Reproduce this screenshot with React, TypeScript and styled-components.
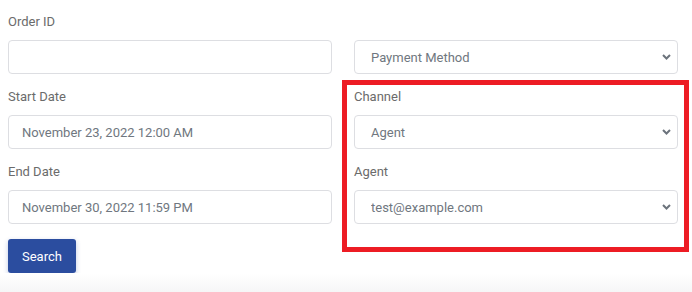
import * as React from "react";
import styled, { createGlobalStyle } from "styled-components";

const GlobalStyle = createGlobalStyle`
  html, body {
    margin: 0;
    padding: 0;
    background: #ffffff;
  }
  body {
    font-family: Roboto, "Liberation Sans", Arial, sans-serif;
  }
`;

const Page = styled.div`
  width: 692px;
  height: 292px;
  display: flex;
  flex-direction: column;
  overflow: hidden;
`;

const Form = styled.form`
  padding: 12px 0 0 8px;
  display: flex;
  flex-direction: column;
  gap: 15px;
`;

const Columns = styled.div`
  display: flex;
  gap: 22px;
`;

const Column = styled.div`
  width: 324px;
  display: flex;
  flex-direction: column;
  gap: 13px;
`;

const Highlight = styled.div`
  position: relative;
  display: flex;
  flex-direction: column;
  gap: 13px;

  &::after {
    content: "";
    position: absolute;
    top: -7px;
    left: -12px;
    right: -11px;
    bottom: -28px;
    border: 5px solid #ed1c24;
    pointer-events: none;
  }
`;

const Field = styled.div`
  display: flex;
  flex-direction: column;
  gap: 8px;
`;

const Label = styled.label`
  font-size: 13px;
  line-height: 20px;
  height: 20px;
  color: #6b6b6b;
`;

const Input = styled.input`
  box-sizing: border-box;
  width: 100%;
  height: 34px;
  padding: 0 13px;
  border: 1px solid #dddee2;
  border-radius: 4px;
  font-family: inherit;
  font-size: 13px;
  color: #707780;
  background: #fff;
  outline: none;
`;

const SelectWrap = styled.div`
  position: relative;
  height: 34px;
`;

const Select = styled.select`
  box-sizing: border-box;
  width: 100%;
  height: 34px;
  padding: 0 30px 0 16px;
  border: 1px solid #dddee2;
  border-radius: 4px;
  font-family: inherit;
  font-size: 13px;
  color: #707780;
  background: #fff;
  appearance: none;
  -webkit-appearance: none;
  outline: none;
`;

const Chevron = styled.svg`
  position: absolute;
  right: 7px;
  top: 14px;
  width: 9px;
  height: 6px;
  pointer-events: none;
`;

const Button = styled.button`
  align-self: flex-start;
  height: 34px;
  padding: 0 14px;
  border: none;
  border-radius: 3px;
  background: #2b4d9f;
  color: #fff;
  font-family: inherit;
  font-size: 13px;
  font-weight: 400;
  box-shadow: 0 2px 5px rgba(43, 77, 159, 0.3);
  cursor: pointer;
`;

const Fade = styled.div`
  margin-top: auto;
  height: 20px;
  background: linear-gradient(#ffffff, #f6f6f7);
`;

const Dropdown: React.FC<{ value: string }> = ({ value }) => (
  <SelectWrap>
    <Select defaultValue={value}>
      <option>{value}</option>
    </Select>
    <Chevron viewBox="0 0 9 6">
      <path d="M1 1l3.5 3.5L8 1" fill="none" stroke="#6c737c" strokeWidth="2" />
    </Chevron>
  </SelectWrap>
);

export default function App() {
  return (
    <Page>
      <GlobalStyle />
      <Form onSubmit={(e) => e.preventDefault()}>
        <Columns>
          <Column>
            <Field>
              <Label>Order ID</Label>
              <Input type="text" />
            </Field>
            <Field>
              <Label>Start Date</Label>
              <Input type="text" defaultValue="November 23, 2022 12:00 AM" />
            </Field>
            <Field>
              <Label>End Date</Label>
              <Input type="text" defaultValue="November 30, 2022 11:59 PM" />
            </Field>
          </Column>
          <Column>
            <Field>
              <Label>&nbsp;</Label>
              <Dropdown value="Payment Method" />
            </Field>
            <Highlight>
              <Field>
                <Label>Channel</Label>
                <Dropdown value="Agent" />
              </Field>
              <Field>
                <Label>Agent</Label>
                <Dropdown value="test@example.com" />
              </Field>
            </Highlight>
          </Column>
        </Columns>
        <Button type="submit">Search</Button>
      </Form>
      <Fade />
    </Page>
  );
}
